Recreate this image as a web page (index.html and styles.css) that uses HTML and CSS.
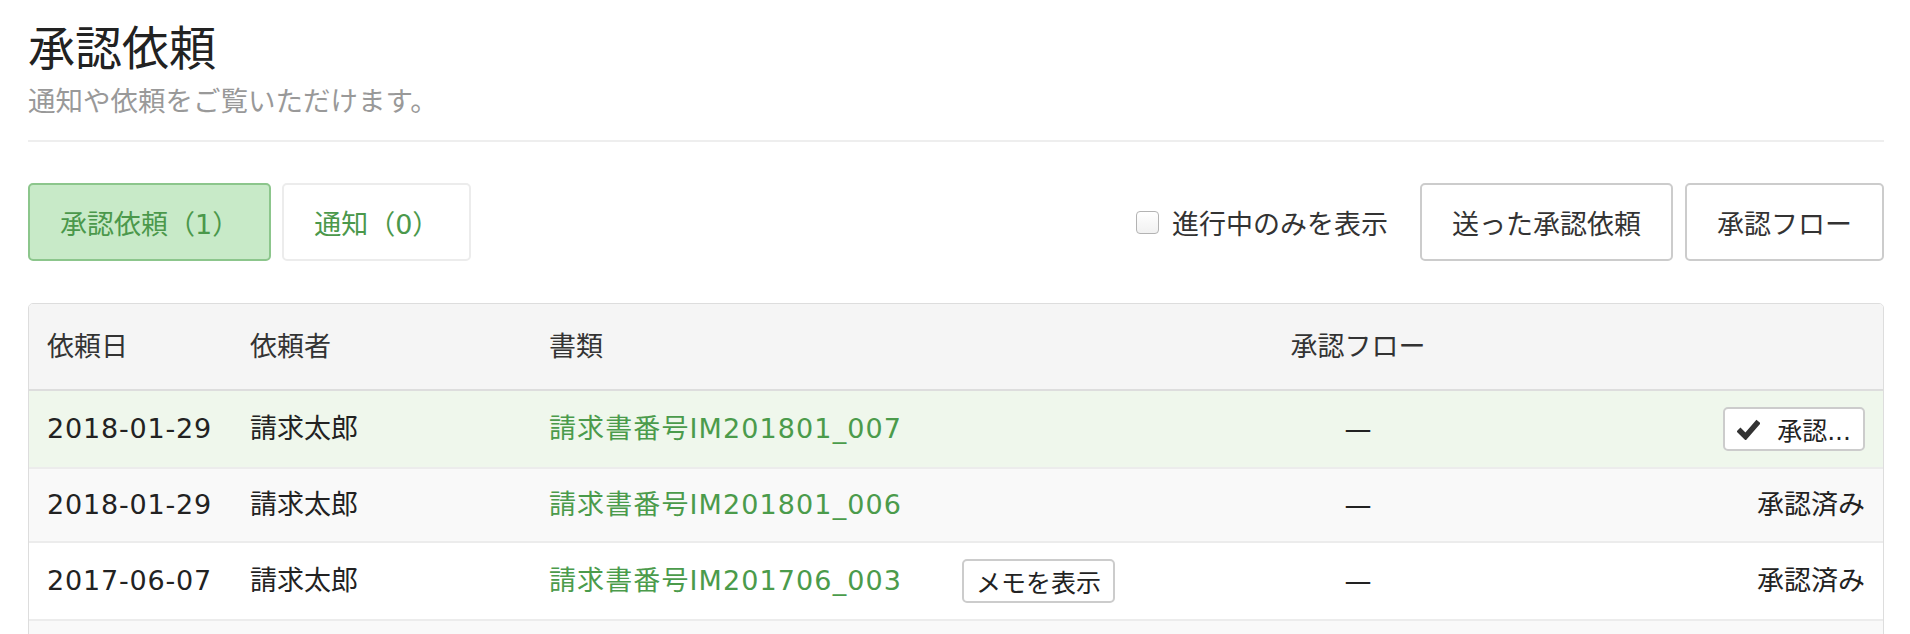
FILE: index.html
```html
<!DOCTYPE html>
<html lang="ja">
<head>
    <meta charset="UTF-8">
    <meta name="viewport" content="width=device-width, initial-scale=1.0">
    <title>承認依頼</title>
    <link rel="stylesheet" href="styles.css">
</head>
<body>
    <div class="page">
        <h1 class="title">承認依頼</h1>
        <p class="subtitle">通知や依頼をご覧いただけます。</p>
        <hr class="divider">

        <div class="toolbar">
            <div class="tabs">
                <button class="tab active">承認依頼（1）</button>
                <button class="tab">通知（0）</button>
            </div>
            <div class="actions">
                <label class="only-active"><input type="checkbox">進行中のみを表示</label>
                <button class="btn">送った承認依頼</button>
                <button class="btn">承認フロー</button>
            </div>
        </div>

        <div class="panel">
            <table class="requests">
                <thead>
                    <tr>
                        <th class="col-date">依頼日</th>
                        <th class="col-user">依頼者</th>
                        <th class="col-doc">書類</th>
                        <th class="col-memo"></th>
                        <th class="col-flow center">承認フロー</th>
                        <th class="col-status"></th>
                    </tr>
                </thead>
                <tbody>
                    <tr class="current">
                        <td class="date">2018-01-29</td>
                        <td>請求太郎</td>
                        <td><a class="doc" href="#">請求書番号IM201801_007</a></td>
                        <td></td>
                        <td class="center">—</td>
                        <td class="right">
                            <button class="btn-sm">
                                <svg class="check" width="23" height="21" viewBox="0 0 23 21"><path d="M1.5 10.5 L8.5 17.5 L21.5 2.5" fill="none" stroke="#333" stroke-width="5.5"/></svg>承認...
                            </button>
                        </td>
                    </tr>
                    <tr>
                        <td class="date">2018-01-29</td>
                        <td>請求太郎</td>
                        <td><a class="doc" href="#">請求書番号IM201801_006</a></td>
                        <td></td>
                        <td class="center">—</td>
                        <td class="right">承認済み</td>
                    </tr>
                    <tr>
                        <td class="date">2017-06-07</td>
                        <td>請求太郎</td>
                        <td><a class="doc" href="#">請求書番号IM201706_003</a></td>
                        <td><button class="btn-sm">メモを表示</button></td>
                        <td class="center">—</td>
                        <td class="right">承認済み</td>
                    </tr>
                    <tr class="more">
                        <td></td>
                        <td></td>
                        <td></td>
                        <td></td>
                        <td></td>
                        <td></td>
                    </tr>
                </tbody>
            </table>
        </div>
    </div>
</body>
</html>
```

FILE: styles.css
```css
body {
    margin: 0;
    font-family: "DejaVu Sans", "Noto Sans CJK JP", sans-serif;
    font-size: 27px;
    color: #222;
    background-color: #fff;
    overflow: hidden;
}
.page {
    padding: 17px 26px 0 28px;
}
.title {
    margin: 0;
    font-family: "Noto Sans CJK JP", sans-serif;
    font-size: 47px;
    line-height: 56px;
    font-weight: normal;
    color: #222;
}
.subtitle {
    margin: 8px 0 0;
    font-family: "Noto Sans CJK JP", sans-serif;
    font-size: 27.5px;
    line-height: 36px;
    color: #999;
}
.divider {
    margin: 23px 0 0;
    height: 0;
    border: 0;
    border-top: 2px solid #eee;
}
.toolbar {
    display: flex;
    justify-content: space-between;
    align-items: center;
    margin-top: 41px;
}
.tabs {
    display: flex;
    gap: 11px;
}
.tab {
    font-family: inherit;
    font-size: 27px;
    height: 78px;
    padding: 0 30px;
    border: 2px solid #ececec;
    border-radius: 5px;
    background-color: #fff;
    color: #4b984b;
}
.tab.active {
    background-color: #c8eac8;
    border-color: #8cc68c;
}
.actions {
    display: flex;
    align-items: center;
}
.only-active {
    display: flex;
    align-items: center;
    gap: 13px;
    margin-right: 32px;
    color: #333;
}
.only-active input {
    appearance: none;
    width: 23px;
    height: 23px;
    margin: 0;
    border: 1px solid #b3b3b3;
    border-radius: 4px;
    background: linear-gradient(#fff, #f1f1f1);
}
.btn {
    font-family: inherit;
    font-size: 27px;
    height: 78px;
    padding: 0 30px;
    border: 2px solid #ccc;
    border-radius: 5px;
    background-color: #fff;
    color: #333;
}
.btn + .btn {
    margin-left: 12px;
}
.panel {
    margin-top: 42px;
    border: 1px solid #ddd;
    border-radius: 5px;
    overflow: hidden;
}
.requests {
    width: 100%;
    border-collapse: collapse;
    table-layout: fixed;
}
.requests th,
.requests td {
    box-sizing: border-box;
}
.col-date { width: 203px; }
.col-user { width: 299px; }
.col-doc { width: 413px; }
.col-memo { width: 206px; }
.col-flow { width: 416px; }
.requests th {
    text-align: left;
    font-weight: normal;
    color: #333;
    background-color: #f5f5f5;
    padding: 24px 18px;
    line-height: 37px;
    border-bottom: 2px solid #ddd;
}
.requests td {
    padding: 16px 18px;
    line-height: 40px;
    border-bottom: 2px solid #ececec;
    white-space: nowrap;
    vertical-align: middle;
}
.requests td.date {
    letter-spacing: 0.8px;
}
.requests tbody tr:nth-child(even) td {
    background-color: #f9f9f9;
}
.requests tr.current td {
    background-color: #eff7ec;
}
.requests tr.more td {
    height: 72px;
}
.requests .center {
    text-align: center;
}
.requests .right {
    text-align: right;
}
.doc {
    color: #4b9b4b;
    text-decoration: none;
    letter-spacing: 1.1px;
}
.btn-sm {
    display: inline-flex;
    align-items: center;
    vertical-align: middle;
    font-family: inherit;
    font-size: 25px;
    height: 44px;
    padding: 0 12px;
    border: 2px solid #ccc;
    border-radius: 5px;
    background-color: #fff;
    color: #222;
}
.check {
    margin-right: 17px;
}
```
